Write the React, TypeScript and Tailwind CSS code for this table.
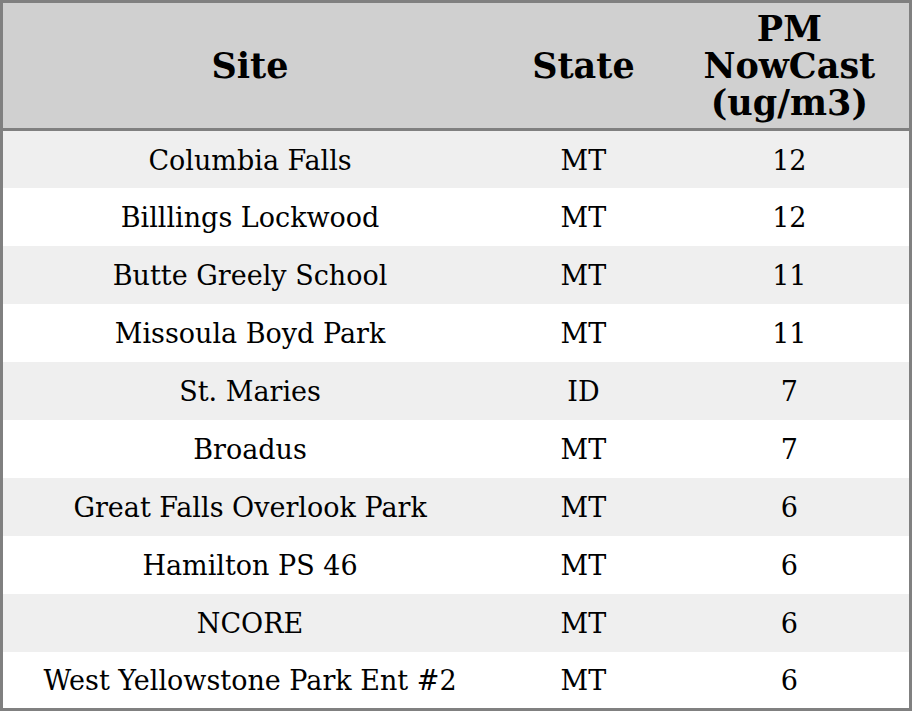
const rows: [string, string, string][] = [
  ['Columbia Falls', 'MT', '12'],
  ['Billlings Lockwood', 'MT', '12'],
  ['Butte Greely School', 'MT', '11'],
  ['Missoula Boyd Park', 'MT', '11'],
  ['St. Maries', 'ID', '7'],
  ['Broadus', 'MT', '7'],
  ['Great Falls Overlook Park', 'MT', '6'],
  ['Hamilton PS 46', 'MT', '6'],
  ['NCORE', 'MT', '6'],
  ['West Yellowstone Park Ent #2', 'MT', '6'],
];

export default function App() {
  return (
    <div className="w-[912px] h-[711px] bg-white font-['DejaVu_Serif',serif] text-black">
      <table className="w-full h-full border-[3px] border-[#808080] border-collapse table-fixed">
        <thead>
          <tr className="bg-[#d0d0d0] h-[128px] border-b-[3px] border-[#808080] text-[35px] font-bold leading-[37px]">
            <th className="w-[494px]">Site</th>
            <th className="w-[172px]">State</th>
            <th className="w-[240px]">
              PM
              <br />
              NowCast
              <br />
              (ug/m3)
            </th>
          </tr>
        </thead>
        <tbody>
          {rows.map(([site, state, pm], i) => (
            <tr key={site} className={`text-[27px] leading-[32px] text-center h-[57.7px] ${i % 2 === 0 ? 'bg-[#efefef]' : 'bg-white'}`}>
              <td className="pt-[3px]">{site}</td>
              <td className="pt-[3px]">{state}</td>
              <td className="pt-[3px]">{pm}</td>
            </tr>
          ))}
        </tbody>
      </table>
    </div>
  );
}
